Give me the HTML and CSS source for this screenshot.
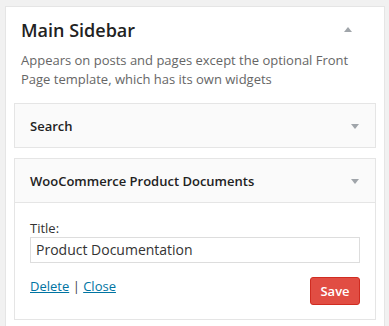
FILE: index.html
```html
<!DOCTYPE html>
<html>
<head>
<meta charset="utf-8">
<link rel="stylesheet" href="styles.css">
</head>
<body>
<div class="sidebar">
  <div class="sidebar-head">
    <h2 class="sidebar-title">Main Sidebar</h2>
    <span class="arrow-up"></span>
  </div>
  <p class="sidebar-desc">Appears on posts and pages except the optional Front Page template, which has its own widgets</p>
  <div class="widget">
    <div class="widget-top">
      <span class="widget-name">Search</span>
      <span class="arrow-down"></span>
    </div>
  </div>
  <div class="widget">
    <div class="widget-top open">
      <span class="widget-name">WooCommerce Product Documents</span>
      <span class="arrow-down"></span>
    </div>
    <div class="widget-body">
      <label class="field-label">Title:</label>
      <div class="field-input">Product Documentation</div>
      <div class="widget-actions">
        <div class="links"><a href="#">Delete</a> | <a href="#">Close</a></div>
        <button class="save">Save</button>
      </div>
    </div>
  </div>
</div>
</body>
</html>
```
FILE: styles.css
```css
html, body {
  margin: 0;
  padding: 0;
  background: #f1f1f1;
  font-family: "Open Sans", "Noto Sans", sans-serif;
  color: #444;
  overflow: hidden;
}
.sidebar {
  margin: 6px 4px 0 5px;
  background: #fff;
  border: 1px solid #e5e5e5;
  padding: 0 8px 40px;
}
.sidebar-head {
  display: flex;
  justify-content: space-between;
  align-items: center;
  padding: 11px 24px 0 7px;
}
.sidebar-title {
  margin: 0;
  font-size: 18px;
  font-weight: 600;
  line-height: 24px;
  color: #222;
}
.arrow-up {
  width: 0;
  height: 0;
  border-left: 4px solid transparent;
  border-right: 4px solid transparent;
  border-bottom: 5px solid #a0a5aa;
  margin-top: -2px;
}
.sidebar-desc {
  margin: 9px 0 0 7px;
  font-size: 13px;
  line-height: 19px;
  color: #666;
  padding-right: 20px;
}
.widget {
  margin-top: 10px;
  border: 1px solid #e5e5e5;
  background: #fff;
}
.sidebar-desc + .widget {
  margin-top: 14px;
}
.widget-top {
  display: flex;
  justify-content: space-between;
  align-items: center;
  height: 43px;
  background: #fafafa;
  padding: 0 16px 0 15px;
}
.widget-top.open {
  border-bottom: 1px solid #e5e5e5;
}
.widget-name {
  font-size: 13px;
  font-weight: 600;
  color: #222;
}
.arrow-down {
  width: 0;
  height: 0;
  border-left: 4px solid transparent;
  border-right: 4px solid transparent;
  border-top: 5px solid #a0a5aa;
  margin-top: 2px;
}
.widget-body {
  padding: 16px 15px 14px;
}
.field-label {
  display: block;
  font-size: 13px;
  line-height: 18px;
  color: #333;
}
.field-input {
  height: 24px;
  border: 1px solid #ddd;
  padding: 0 5px;
  font-size: 14px;
  line-height: 24px;
  color: #333;
}
.widget-actions {
  display: flex;
  justify-content: space-between;
  align-items: flex-start;
  margin-top: 11px;
}
.links {
  padding-top: 2px;
  font-size: 13px;
  line-height: 20px;
  color: #444;
}
.links a {
  color: #0074a2;
  text-decoration: underline;
}
.save {
  margin-top: 3px;
  width: 50px;
  height: 28px;
  background: #e14d43;
  border: 1px solid #d02c21;
  border-radius: 3px;
  color: #fff;
  font-family: "Open Sans", "Noto Sans", sans-serif;
  font-size: 13px;
  font-weight: 600;
  padding: 0;
}
```
